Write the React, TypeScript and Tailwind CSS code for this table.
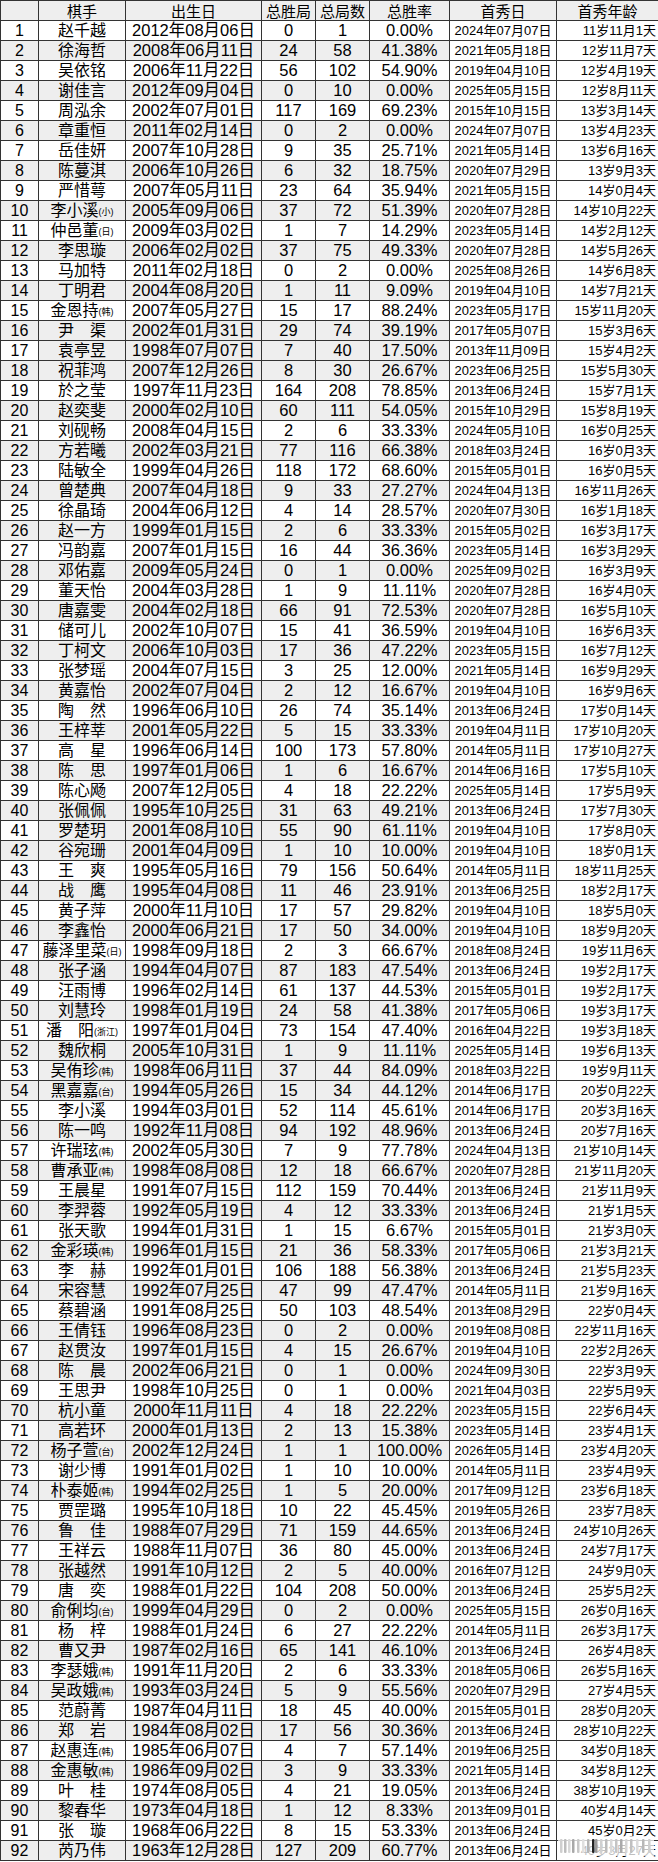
import React from 'react';

const RAW = `
1 赵千越 2012年08月06日 0 1 0.00% 2024年07月07日 11岁11月1天
2 徐海哲 2008年06月11日 24 58 41.38% 2021年05月18日 12岁11月7天
3 吴依铭 2006年11月22日 56 102 54.90% 2019年04月10日 12岁4月19天
4 谢佳言 2012年09月04日 0 10 0.00% 2025年05月15日 12岁8月11天
5 周泓余 2002年07月01日 117 169 69.23% 2015年10月15日 13岁3月14天
6 章重恒 2011年02月14日 0 2 0.00% 2024年07月07日 13岁4月23天
7 岳佳妍 2007年10月28日 9 35 25.71% 2021年05月14日 13岁6月16天
8 陈蔓淇 2006年10月26日 6 32 18.75% 2020年07月29日 13岁9月3天
9 严惜萼 2007年05月11日 23 64 35.94% 2021年05月15日 14岁0月4天
10 李小溪|小 2005年09月06日 37 72 51.39% 2020年07月28日 14岁10月22天
11 仲邑董|日 2009年03月02日 1 7 14.29% 2023年05月14日 14岁2月12天
12 李思璇 2006年02月02日 37 75 49.33% 2020年07月28日 14岁5月26天
13 马加特 2011年02月18日 0 2 0.00% 2025年08月26日 14岁6月8天
14 丁明君 2004年08月20日 1 11 9.09% 2019年04月10日 14岁7月21天
15 金恩持|韩 2007年05月27日 15 17 88.24% 2023年05月17日 15岁11月20天
16 尹　渠 2002年01月31日 29 74 39.19% 2017年05月07日 15岁3月6天
17 袁亭昱 1998年07月07日 7 40 17.50% 2013年11月09日 15岁4月2天
18 祝菲鸿 2007年12月26日 8 30 26.67% 2023年06月25日 15岁5月30天
19 於之莹 1997年11月23日 164 208 78.85% 2013年06月24日 15岁7月1天
20 赵奕斐 2000年02月10日 60 111 54.05% 2015年10月29日 15岁8月19天
21 刘砚畅 2008年04月15日 2 6 33.33% 2024年05月10日 16岁0月25天
22 方若曦 2002年03月21日 77 116 66.38% 2018年03月24日 16岁0月3天
23 陆敏全 1999年04月26日 118 172 68.60% 2015年05月01日 16岁0月5天
24 曾楚典 2007年04月18日 9 33 27.27% 2024年04月13日 16岁11月26天
25 徐晶琦 2004年06月12日 4 14 28.57% 2020年07月30日 16岁1月18天
26 赵一方 1999年01月15日 2 6 33.33% 2015年05月02日 16岁3月17天
27 冯韵嘉 2007年01月15日 16 44 36.36% 2023年05月14日 16岁3月29天
28 邓佑嘉 2009年05月24日 0 1 0.00% 2025年09月02日 16岁3月9天
29 董天怡 2004年03月28日 1 9 11.11% 2020年07月28日 16岁4月0天
30 唐嘉雯 2004年02月18日 66 91 72.53% 2020年07月28日 16岁5月10天
31 储可儿 2002年10月07日 15 41 36.59% 2019年04月10日 16岁6月3天
32 丁柯文 2006年10月03日 17 36 47.22% 2023年05月15日 16岁7月12天
33 张梦瑶 2004年07月15日 3 25 12.00% 2021年05月14日 16岁9月29天
34 黄嘉怡 2002年07月04日 2 12 16.67% 2019年04月10日 16岁9月6天
35 陶　然 1996年06月10日 26 74 35.14% 2013年06月24日 17岁0月14天
36 王梓莘 2001年05月22日 5 15 33.33% 2019年04月11日 17岁10月20天
37 高　星 1996年06月14日 100 173 57.80% 2014年05月11日 17岁10月27天
38 陈　思 1997年01月06日 1 6 16.67% 2014年06月16日 17岁5月10天
39 陈心飏 2007年12月05日 4 18 22.22% 2025年05月14日 17岁5月9天
40 张佩佩 1995年10月25日 31 63 49.21% 2013年06月24日 17岁7月30天
41 罗楚玥 2001年08月10日 55 90 61.11% 2019年04月10日 17岁8月0天
42 谷宛珊 2001年04月09日 1 10 10.00% 2019年04月10日 18岁0月1天
43 王　爽 1995年05月16日 79 156 50.64% 2014年05月11日 18岁11月25天
44 战　鹰 1995年04月08日 11 46 23.91% 2013年06月25日 18岁2月17天
45 黄子萍 2000年11月10日 17 57 29.82% 2019年04月10日 18岁5月0天
46 李鑫怡 2000年06月21日 17 50 34.00% 2019年04月10日 18岁9月20天
47 藤泽里菜|日 1998年09月18日 2 3 66.67% 2018年08月24日 19岁11月6天
48 张子涵 1994年04月07日 87 183 47.54% 2013年06月24日 19岁2月17天
49 汪雨博 1996年02月14日 61 137 44.53% 2015年05月01日 19岁2月17天
50 刘慧玲 1998年01月19日 24 58 41.38% 2017年05月06日 19岁3月17天
51 潘　阳|浙江 1997年01月04日 73 154 47.40% 2016年04月22日 19岁3月18天
52 魏欣桐 2005年10月31日 1 9 11.11% 2025年05月14日 19岁6月13天
53 吴侑珍|韩 1998年06月11日 37 44 84.09% 2018年03月22日 19岁9月11天
54 黑嘉嘉|台 1994年05月26日 15 34 44.12% 2014年06月17日 20岁0月22天
55 李小溪 1994年03月01日 52 114 45.61% 2014年06月17日 20岁3月16天
56 陈一鸣 1992年11月08日 94 192 48.96% 2013年06月24日 20岁7月16天
57 许瑞玹|韩 2002年05月30日 7 9 77.78% 2024年04月13日 21岁10月14天
58 曹承亚|韩 1998年08月08日 12 18 66.67% 2020年07月28日 21岁11月20天
59 王晨星 1991年07月15日 112 159 70.44% 2013年06月24日 21岁11月9天
60 李羿蓉 1992年05月19日 4 12 33.33% 2013年06月24日 21岁1月5天
61 张天歌 1994年01月31日 1 15 6.67% 2015年05月01日 21岁3月0天
62 金彩瑛|韩 1996年01月15日 21 36 58.33% 2017年05月06日 21岁3月21天
63 李　赫 1992年01月01日 106 188 56.38% 2013年06月24日 21岁5月23天
64 宋容慧 1992年07月25日 47 99 47.47% 2014年05月11日 21岁9月16天
65 蔡碧涵 1991年08月25日 50 103 48.54% 2013年08月29日 22岁0月4天
66 王倩钰 1996年08月23日 0 2 0.00% 2019年08月08日 22岁11月16天
67 赵贯汝 1997年01月15日 4 15 26.67% 2019年04月10日 22岁2月26天
68 陈　晨 2002年06月21日 0 1 0.00% 2024年09月30日 22岁3月9天
69 王思尹 1998年10月25日 0 1 0.00% 2021年04月03日 22岁5月9天
70 杭小童 2000年11月11日 4 18 22.22% 2023年05月15日 22岁6月4天
71 高若环 2000年01月13日 2 13 15.38% 2023年05月14日 23岁4月1天
72 杨子萱|台 2002年12月24日 1 1 100.00% 2026年05月14日 23岁4月20天
73 谢少博 1991年01月02日 1 10 10.00% 2014年05月11日 23岁4月9天
74 朴泰姬|韩 1994年02月25日 1 5 20.00% 2017年09月12日 23岁6月18天
75 贾罡璐 1995年10月18日 10 22 45.45% 2019年05月26日 23岁7月8天
76 鲁　佳 1988年07月29日 71 159 44.65% 2013年06月24日 24岁10月26天
77 王祥云 1988年11月07日 36 80 45.00% 2013年06月24日 24岁7月17天
78 张越然 1991年10月12日 2 5 40.00% 2016年07月12日 24岁9月0天
79 唐　奕 1988年01月22日 104 208 50.00% 2013年06月24日 25岁5月2天
80 俞俐均|台 1999年04月29日 0 2 0.00% 2025年05月15日 26岁0月16天
81 杨　梓 1988年01月24日 6 27 22.22% 2014年05月11日 26岁3月17天
82 曹又尹 1987年02月16日 65 141 46.10% 2013年06月24日 26岁4月8天
83 李瑟娥|韩 1991年11月20日 2 6 33.33% 2018年05月06日 26岁5月16天
84 吴政娥|韩 1993年03月24日 5 9 55.56% 2020年07月29日 27岁4月5天
85 范蔚菁 1987年04月11日 18 45 40.00% 2015年05月01日 28岁0月20天
86 郑　岩 1984年08月02日 17 56 30.36% 2013年06月24日 28岁10月22天
87 赵惠连|韩 1985年06月07日 4 7 57.14% 2019年06月25日 34岁0月18天
88 金惠敏|韩 1986年09月02日 3 9 33.33% 2021年05月14日 34岁8月12天
89 叶　桂 1974年08月05日 4 21 19.05% 2013年06月24日 38岁10月19天
90 黎春华 1973年04月18日 1 12 8.33% 2013年09月01日 40岁4月14天
91 张　璇 1968年06月22日 8 15 53.33% 2013年06月24日 45岁0月2天
92 芮乃伟 1963年12月28日 127 209 60.77% 2013年06月24日 49岁3月27天
`;

type Player = {
  no: string;
  name: string;
  tag?: string;
  birth: string;
  wins: string;
  games: string;
  rate: string;
  debut: string;
  age: string;
};

const players: Player[] = RAW.trim()
  .split('\n')
  .map((line) => {
    const [no, nameRaw, birth, wins, games, rate, debut, age] = line.trim().split(' ');
    const [name, tag] = nameRaw.split('|');
    return { no, name, tag, birth, wins, games, rate, debut, age };
  });

// rows that kept their grey band after sorting (odd ones listed by hand)
const EXTRA_SHADED = new Set([17, 41, 53, 67, 71]);

const ROW = 'grid h-[20px] grid-cols-[38px_87px_136px_54px_54px_80px_107px_102px] border-b border-[#333]';
const CELL = 'flex h-[19px] items-center justify-center whitespace-nowrap border-r border-[#333] leading-[19px]';
const SHADE = 'bg-[#eeeeee]';

// weibo-style watermark in the bottom right corner
const BARS = [
  [2, '#cfcfcf'], [6, '#bdbdbd'], [10, '#d8d8d8'], [14, '#a9a9a9'], [19, '#c8c8c8'],
  [24, '#e0e0e0'], [29, '#b5b5b5'], [34, '#222'], [37, '#9a9a9a'], [42, '#d0d0d0'],
  [47, '#bcbcbc'], [52, '#d9d9d9'], [57, '#c4c4c4'], [62, '#aaaaaa'], [67, '#d6d6d6'],
  [72, '#c0c0c0'], [78, '#dcdcdc'], [84, '#b8b8b8'], [90, '#cfcfcf'],
] as const;

function Watermark() {
  return (
    <svg className="absolute right-[4px] bottom-[5px]" width="96" height="20" viewBox="0 0 96 20">
      <rect x="0" y="0" width="96" height="20" fill="#ffffff" opacity="0.75" />
      {BARS.map(([x, c]) => (
        <rect key={x} x={x} y="3" width="2.5" height="14" fill={c} rx="1" />
      ))}
    </svg>
  );
}

export default function App() {
  return (
    <div className="relative w-[658px] bg-white text-black font-['Liberation_Sans','Noto_Sans_CJK_SC',sans-serif]">
      <div className="border-t border-l border-[#333]">
        <div className={`${ROW} ${SHADE} text-[15px] font-['Noto_Sans_CJK_SC',sans-serif]`}>
          <div className={CELL}></div>
          <div className={CELL}>棋手</div>
          <div className={CELL}>出生日</div>
          <div className={CELL}>总胜局</div>
          <div className={CELL}>总局数</div>
          <div className={CELL}>总胜率</div>
          <div className={CELL}>首秀日</div>
          <div className={CELL}>首秀年龄</div>
        </div>
        {players.map((p, i) => {
          const n = i + 1;
          const first = n % 2 === 0 ? SHADE : 'bg-white';
          const bg = n % 2 === 0 || EXTRA_SHADED.has(n) ? SHADE : 'bg-white';
          return (
            <div key={p.no} className={ROW}>
              <div className={`${CELL} ${first} text-[16px]`}>{p.no}</div>
              <div className={`${CELL} ${bg} text-[16px]`}>
                {p.name}
                {p.tag && <span className="mt-[3px] text-[9px]">({p.tag})</span>}
              </div>
              <div className={`${CELL} ${bg} text-[16.5px]`}>{p.birth}</div>
              <div className={`${CELL} ${bg} text-[16.5px]`}>{p.wins}</div>
              <div className={`${CELL} ${bg} text-[16.5px]`}>{p.games}</div>
              <div className={`${CELL} ${bg} text-[16.5px]`}>{p.rate}</div>
              <div className={`${CELL} bg-white text-[13px]`}>{p.debut}</div>
              <div className={`${CELL} justify-end! bg-white pr-[2px] text-[13px]`}>{p.age}</div>
            </div>
          );
        })}
      </div>
      <Watermark />
    </div>
  );
}
